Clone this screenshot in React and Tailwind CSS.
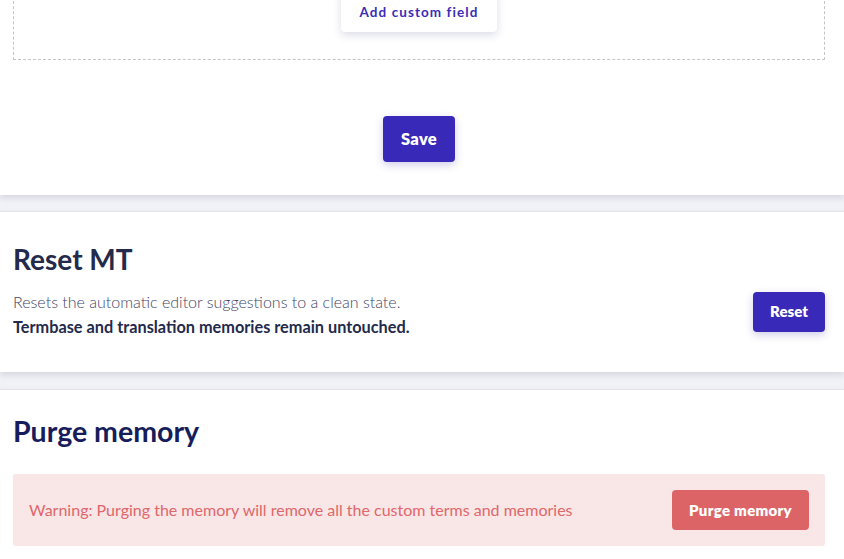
import React from "react";

const font = { fontFamily: "Lato, 'Open Sans', sans-serif" };

const Card = ({ children, className = "" }) => (
  <div className={`bg-white border-t border-[#e3e4ec] shadow-[0_3px_6px_rgba(40,45,90,0.14)] ${className}`}>
    {children}
  </div>
);

export default function App() {
  return (
    <div className="min-h-screen bg-[#f1f2f7] overflow-hidden" style={font}>
      {/* custom fields + save */}
      <Card className="-mt-[61px] pl-[13px] pr-[19px] pb-[33px]">
        <div className="border border-dashed border-[#c4c4ca] h-[120px] flex justify-center pt-[51px]">
          <button className="w-[156px] h-[40px] bg-white rounded-[4px] shadow-[0_3px_8px_rgba(50,55,120,0.18)] text-[13.5px] font-bold tracking-[0.08em] text-[#3a2db6]">
            Add custom field
          </button>
        </div>
        <div className="flex justify-center mt-[56px]">
          <button className="w-[72px] h-[46px] rounded-[4px] bg-[#3829b8] text-white text-[16.5px] font-extrabold tracking-[0.02em] shadow-[0_3px_8px_rgba(40,30,150,0.22)]">
            Save
          </button>
        </div>
      </Card>

      {/* Reset MT */}
      <Card className="mt-[16px] pl-[13px] pr-[19px] pt-[30px] pb-[33px]">
        <h2 className="text-[28px] leading-[34px] font-bold text-[#232a4c]">Reset MT</h2>
        <div className="flex items-center justify-between mt-[13px]">
          <div className="text-[16px] leading-[25px] text-[#3f4566]">
            <p className="font-light">Resets the automatic editor suggestions to a clean state.</p>
            <p className="font-bold text-[16.3px] text-[#232a4c]">Termbase and translation memories remain untouched.</p>
          </div>
          <button className="w-[72px] h-[40px] -mt-[5px] rounded-[4px] bg-[#3829b8] text-white text-[15px] font-extrabold shadow-[0_3px_8px_rgba(40,30,150,0.22)]">
            Reset
          </button>
        </div>
      </Card>

      {/* Purge memory */}
      <Card className="mt-[17px] pl-[13px] pr-[19px] pt-[24px] pb-[20px]">
        <h2 className="text-[28.5px] leading-[34px] font-bold text-[#161d5a]">Purge memory</h2>
        <div className="mt-[26px] bg-[#f9e6e7] rounded-[3px] h-[72px] flex items-center justify-between pl-[16px] pr-[16px]">
          <p className="text-[16px] text-[#e0676a]">
            Warning: Purging the memory will remove all the custom terms and memories
          </p>
          <button className="w-[137px] h-[40px] rounded-[4px] bg-[#dc6466] text-white text-[15px] font-extrabold tracking-[0.02em]">
            Purge memory
          </button>
        </div>
      </Card>
    </div>
  );
}
